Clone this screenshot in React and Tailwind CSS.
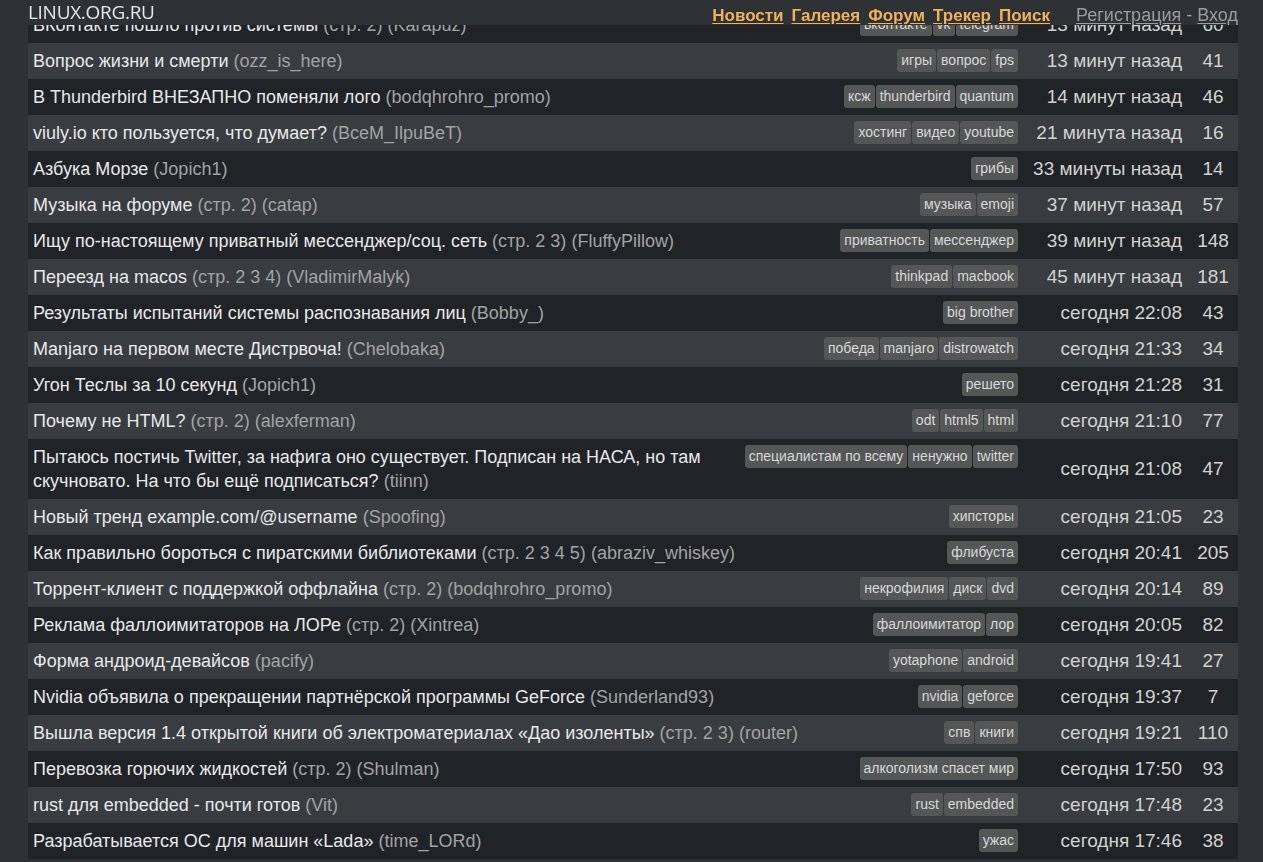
import React from 'react';

const topics = [
  { title: 'ВКонтакте пошло против системы', pages: '(стр. 2)', author: 'Karapuz', tags: ['вконтакте', 'vk', 'telegram'], date: '13 минут назад', count: 60 },
  { title: 'Вопрос жизни и смерти', author: 'ozz_is_here', tags: ['игры', 'вопрос', 'fps'], date: '13 минут назад', count: 41 },
  { title: 'В Thunderbird ВНЕЗАПНО поменяли лого', author: 'bodqhrohro_promo', tags: ['ксж', 'thunderbird', 'quantum'], date: '14 минут назад', count: 46 },
  { title: 'viuly.io кто пользуется, что думает?', author: 'ВсеМ_IlpuBeT', tags: ['хостинг', 'видео', 'youtube'], date: '21 минута назад', count: 16 },
  { title: 'Азбука Морзе', author: 'Jopich1', tags: ['грибы'], date: '33 минуты назад', count: 14 },
  { title: 'Музыка на форуме', pages: '(стр. 2)', author: 'catap', tags: ['музыка', 'emoji'], date: '37 минут назад', count: 57 },
  { title: 'Ищу по-настоящему приватный мессенджер/соц. сеть', pages: '(стр. 2 3)', author: 'FluffyPillow', tags: ['приватность', 'мессенджер'], date: '39 минут назад', count: 148 },
  { title: 'Переезд на macos', pages: '(стр. 2 3 4)', author: 'VladimirMalyk', tags: ['thinkpad', 'macbook'], date: '45 минут назад', count: 181 },
  { title: 'Результаты испытаний системы распознавания лиц', author: 'Bobby_', tags: ['big brother'], date: 'сегодня 22:08', count: 43 },
  { title: 'Manjaro на первом месте Дистрвоча!', author: 'Chelobaka', tags: ['победа', 'manjaro', 'distrowatch'], date: 'сегодня 21:33', count: 34 },
  { title: 'Угон Теслы за 10 секунд', author: 'Jopich1', tags: ['решето'], date: 'сегодня 21:28', count: 31 },
  { title: 'Почему не HTML?', pages: '(стр. 2)', author: 'alexferman', tags: ['odt', 'html5', 'html'], date: 'сегодня 21:10', count: 77 },
  { title: 'Пытаюсь постичь Twitter, за нафига оно существует. Подписан на НАСА, но там скучновато. На что бы ещё подписаться?', author: 'tiinn', tags: ['специалистам по всему', 'ненужно', 'twitter'], date: 'сегодня 21:08', count: 47 },
  { title: 'Новый тренд example.com/@username', author: 'Spoofing', tags: ['хипсторы'], date: 'сегодня 21:05', count: 23 },
  { title: 'Как правильно бороться с пиратскими библиотеками', pages: '(стр. 2 3 4 5)', author: 'abraziv_whiskey', tags: ['флибуста'], date: 'сегодня 20:41', count: 205 },
  { title: 'Торрент-клиент с поддержкой оффлайна', pages: '(стр. 2)', author: 'bodqhrohro_promo', tags: ['некрофилия', 'диск', 'dvd'], date: 'сегодня 20:14', count: 89 },
  { title: 'Реклама фаллоимитаторов на ЛОРе', pages: '(стр. 2)', author: 'Xintrea', tags: ['фаллоимитатор', 'лор'], date: 'сегодня 20:05', count: 82 },
  { title: 'Форма андроид-девайсов', author: 'pacify', tags: ['yotaphone', 'android'], date: 'сегодня 19:41', count: 27 },
  { title: 'Nvidia объявила о прекращении партнёрской программы GeForce', author: 'Sunderland93', tags: ['nvidia', 'geforce'], date: 'сегодня 19:37', count: 7 },
  { title: 'Вышла версия 1.4 открытой книги об электроматериалах «Дао изоленты»', pages: '(стр. 2 3)', author: 'router', tags: ['спв', 'книги'], date: 'сегодня 19:21', count: 110 },
  { title: 'Перевозка горючих жидкостей', pages: '(стр. 2)', author: 'Shulman', tags: ['алкоголизм спасет мир'], date: 'сегодня 17:50', count: 93 },
  { title: 'rust для embedded - почти готов', author: 'Vit', tags: ['rust', 'embedded'], date: 'сегодня 17:48', count: 23 },
  { title: 'Разрабатывается ОС для машин «Lada»', author: 'time_LORd', tags: ['ужас'], date: 'сегодня 17:46', count: 38 },
];

const nav = ['Новости', 'Галерея', 'Форум', 'Трекер', 'Поиск'];

function Row({ t, i }) {
  return (
    <div className={`flex items-start py-[6px] leading-[24px] ${i % 2 ? 'bg-[#393d40]' : 'bg-[#202427]'}`}>
      <div className="flex-1 min-w-0 flex items-start justify-between pl-[5px]">
        <div className="text-[#e8e8e8] text-[18px] pr-[38px]">
          {t.title}{' '}
          {t.pages && <span className="text-[#a3a3a3]">{t.pages} </span>}
          <span className="text-[#a3a3a3]">({t.author})</span>
        </div>
        <div className="flex shrink-0 gap-px">
          {t.tags.map((tag) => (
            <span key={tag} className="bg-[#555756] text-[#d8d8d8] text-[14px] leading-[23px] px-[4px] rounded-[3px] whitespace-nowrap">
              {tag}
            </span>
          ))}
        </div>
      </div>
      <div className="w-[170px] shrink-0 self-center text-right pr-[6px] text-[19px] text-[#d2d2ce]">{t.date}</div>
      <div className="w-[50px] shrink-0 self-center text-center text-[19px] text-[#d2d2ce]">{t.count}</div>
    </div>
  );
}

export default function App() {
  return (
    <div className="min-h-screen bg-[#2e3235] font-['Liberation_Sans',Arial,sans-serif]">
      {/* fixed header */}
      <header className="fixed top-0 inset-x-0 h-[25px] bg-[#2e3235] z-10 flex items-end justify-between pl-[28px] pr-[25px]">
        <span className="self-start mt-[1px] text-[#e6e6e6] text-[19px] leading-[22px] font-['Open_Sans',sans-serif] tracking-[-0.3px]">LINUX.ORG.RU</span>
        <div className="flex items-baseline text-[17px] leading-[21px] mb-[-1px]">
          {nav.map((n) => (
            <a key={n} href="#" className="text-[#f0b356] font-bold underline underline-offset-2 mr-[8px]">{n}</a>
          ))}
          <span className="ml-[18px] text-[18px] text-[#9c9c9c]">
            <a href="#" className="underline underline-offset-2">Регистрация</a> - <a href="#" className="underline underline-offset-2">Вход</a>
          </span>
        </div>
      </header>

      <main className="pt-[7px] pl-[28px] pr-[25px]">
        {topics.map((t, i) => (
          <Row key={i} t={t} i={i} />
        ))}
      </main>
    </div>
  );
}
